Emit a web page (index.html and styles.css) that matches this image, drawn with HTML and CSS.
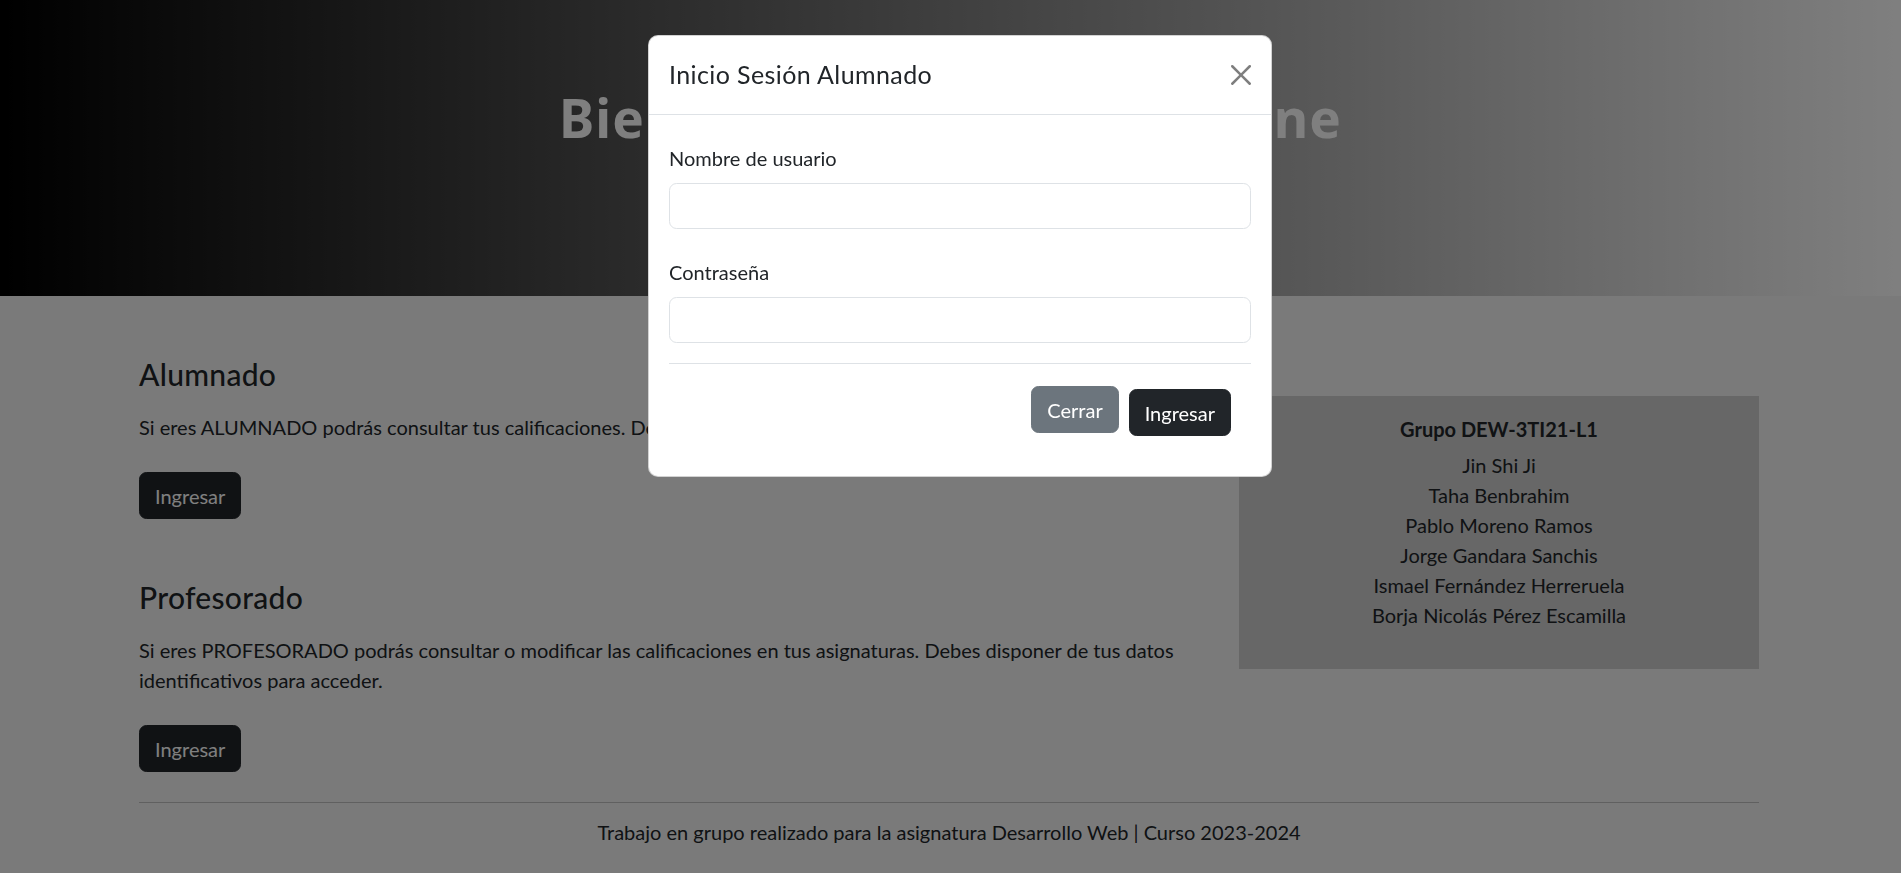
FILE: index.html
```html
<!DOCTYPE html>
<html lang="es">
<head>
<meta charset="utf-8">
<title>Calificaciones</title>
<link rel="stylesheet" href="styles.css">
</head>
<body>
<header class="hero">
  <h1 class="hero-title">Bienvenido/a a Notas Online</h1>
</header>

<main class="container">
  <div class="row">
    <div class="col-main">
      <section class="role">
        <h2 class="role-title">Alumnado</h2>
        <p class="role-text">Si eres ALUMNADO podrás consultar tus calificaciones. Debes disponer de tus datos identificativos para acceder.</p>
        <button class="btn btn-dark" type="button">Ingresar</button>
      </section>
      <section class="role">
        <h2 class="role-title">Profesorado</h2>
        <p class="role-text">Si eres PROFESORADO podrás consultar o modificar las calificaciones en tus asignaturas. Debes disponer de tus datos identificativos para acceder.</p>
        <button class="btn btn-dark" type="button">Ingresar</button>
      </section>
    </div>
    <aside class="col-side">
      <div class="group-card">
        <h6 class="group-title">Grupo DEW-3TI21-L1</h6>
        <ul class="group-list">
          <li>Jin Shi Ji</li>
          <li>Taha Benbrahim</li>
          <li>Pablo Moreno Ramos</li>
          <li>Jorge Gandara Sanchis</li>
          <li>Ismael Fernández Herreruela</li>
          <li>Borja Nicolás Pérez Escamilla</li>
        </ul>
      </div>
    </aside>
  </div>
</main>

<footer class="container site-footer">
  <p class="footer-text">Trabajo en grupo realizado para la asignatura Desarrollo Web | Curso 2023-2024</p>
</footer>

<div class="backdrop"></div>

<div class="modal">
  <div class="modal-dialog">
    <div class="modal-content">
      <div class="modal-header">
        <h5 class="modal-title">Inicio Sesión Alumnado</h5>
        <button class="btn-close" type="button" aria-label="Close">
          <svg viewBox="0 0 16 16" width="20" height="20"><path d="M.293.293a1 1 0 0 1 1.414 0L8 6.586 14.293.293a1 1 0 1 1 1.414 1.414L9.414 8l6.293 6.293a1 1 0 0 1-1.414 1.414L8 9.414l-6.293 6.293a1 1 0 0 1-1.414-1.414L6.586 8 .293 1.707a1 1 0 0 1 0-1.414z"/></svg>
        </button>
      </div>
      <div class="modal-body">
        <div class="field">
          <label class="form-label" for="usuario">Nombre de usuario</label>
          <input class="form-control" id="usuario" type="text">
        </div>
        <div class="field">
          <label class="form-label" for="clave">Contraseña</label>
          <input class="form-control" id="clave" type="password">
        </div>
        <div class="modal-footer">
          <button class="btn btn-secondary btn-close-modal" type="button">Cerrar</button>
          <button class="btn btn-dark btn-submit" type="button">Ingresar</button>
        </div>
      </div>
    </div>
  </div>
</div>
</body>
</html>
```

FILE: styles.css
```css
* { box-sizing: border-box; }

html, body {
  margin: 0;
  padding: 0;
}

body {
  font-family: Lato, "Noto Sans", sans-serif;
  font-size: 20px;
  line-height: 30px;
  color: #212529;
  background: #f5f5f5;
  overflow: hidden;
  height: 873px;
  padding-right: 3px;
}

.hero {
  height: 296px;
  background: linear-gradient(to right, #000000, #ffffff);
  padding-top: 85px;
  text-align: center;
  margin-right: -3px;
}

.hero-title {
  margin: 0;
  font-family: "Noto Sans", "Open Sans", sans-serif;
  font-size: 53px;
  line-height: 65px;
  font-weight: 700;
  letter-spacing: 1.05px;
  color: #ffffff;
}

.container {
  width: 1620px;
  margin: 0 auto;
}

main.container {
  padding-top: 60px;
  padding-bottom: 30px;
}

.row {
  display: flex;
  gap: 30px;
}

.col-main {
  width: 1070px;
  display: flex;
  flex-direction: column;
  gap: 60px;
}

.col-side {
  width: 520px;
  padding-top: 40px;
}

.role-title {
  margin: 0 0 20px;
  font-size: 30px;
  line-height: 36px;
  font-weight: 500;
  letter-spacing: 0.3px;
}

.role-text {
  margin: 0 0 30px;
}

.btn {
  display: inline-block;
  font-family: inherit;
  font-size: 20px;
  line-height: 30px;
  padding: 7.5px 15px;
  border: 1px solid transparent;
  border-radius: 7.5px;
  color: #ffffff;
  cursor: pointer;
}

.btn-dark {
  background: #212529;
  border-color: #212529;
}

.btn-secondary {
  background: #6c757d;
  border-color: #6c757d;
}

.group-card {
  background: #cecece;
  padding: 21px 20px 39px;
  text-align: center;
}

.group-title {
  margin: 0 0 9px;
  font-size: 20px;
  line-height: 24px;
  font-weight: 700;
}

.group-list {
  list-style: none;
  margin: 0;
  padding: 0;
}

.site-footer {
  border-top: 1px solid #c0c0c0;
}

.footer-text {
  margin: 14px 0 0;
  text-align: center;
}

.backdrop {
  position: fixed;
  inset: 0;
  background: rgba(0, 0, 0, 0.5);
}

.modal {
  position: fixed;
  inset: 0;
  padding-left: 19px;
}

.modal-dialog {
  width: 624px;
  margin: 35px auto 0;
}

.modal-content {
  background: #ffffff;
  border: 1px solid rgba(0, 0, 0, 0.175);
  border-radius: 10px;
}

.modal-header {
  display: flex;
  align-items: center;
  justify-content: space-between;
  padding: 20px;
  border-bottom: 1px solid #dee2e6;
}

.modal-title {
  margin: 0;
  font-size: 25px;
  line-height: 37.5px;
  font-weight: 400;
  letter-spacing: 0.4px;
}

.btn-close {
  border: 0;
  background: none;
  padding: 0;
  width: 20px;
  height: 20px;
  opacity: 0.5;
  cursor: pointer;
}

.btn-close svg {
  display: block;
  fill: #000000;
}

.modal-body {
  padding: 20px;
}

.field {
  margin-bottom: 20px;
}

.form-label {
  display: block;
  padding-top: 8px;
  margin: 0 0 10px;
}

.form-control {
  display: block;
  width: 100%;
  height: 46px;
  padding: 7px 15px;
  font-family: inherit;
  font-size: 20px;
  border: 1px solid #dee2e6;
  border-radius: 7.5px;
  background: #ffffff;
}

.modal-footer {
  display: flex;
  justify-content: flex-end;
  align-items: flex-start;
  border-top: 1px solid #dee2e6;
  padding: 15px;
}

.btn-close-modal {
  margin: 7.5px 5px 0;
}

.btn-submit {
  margin: 10.5px 5px 5px;
}
```
